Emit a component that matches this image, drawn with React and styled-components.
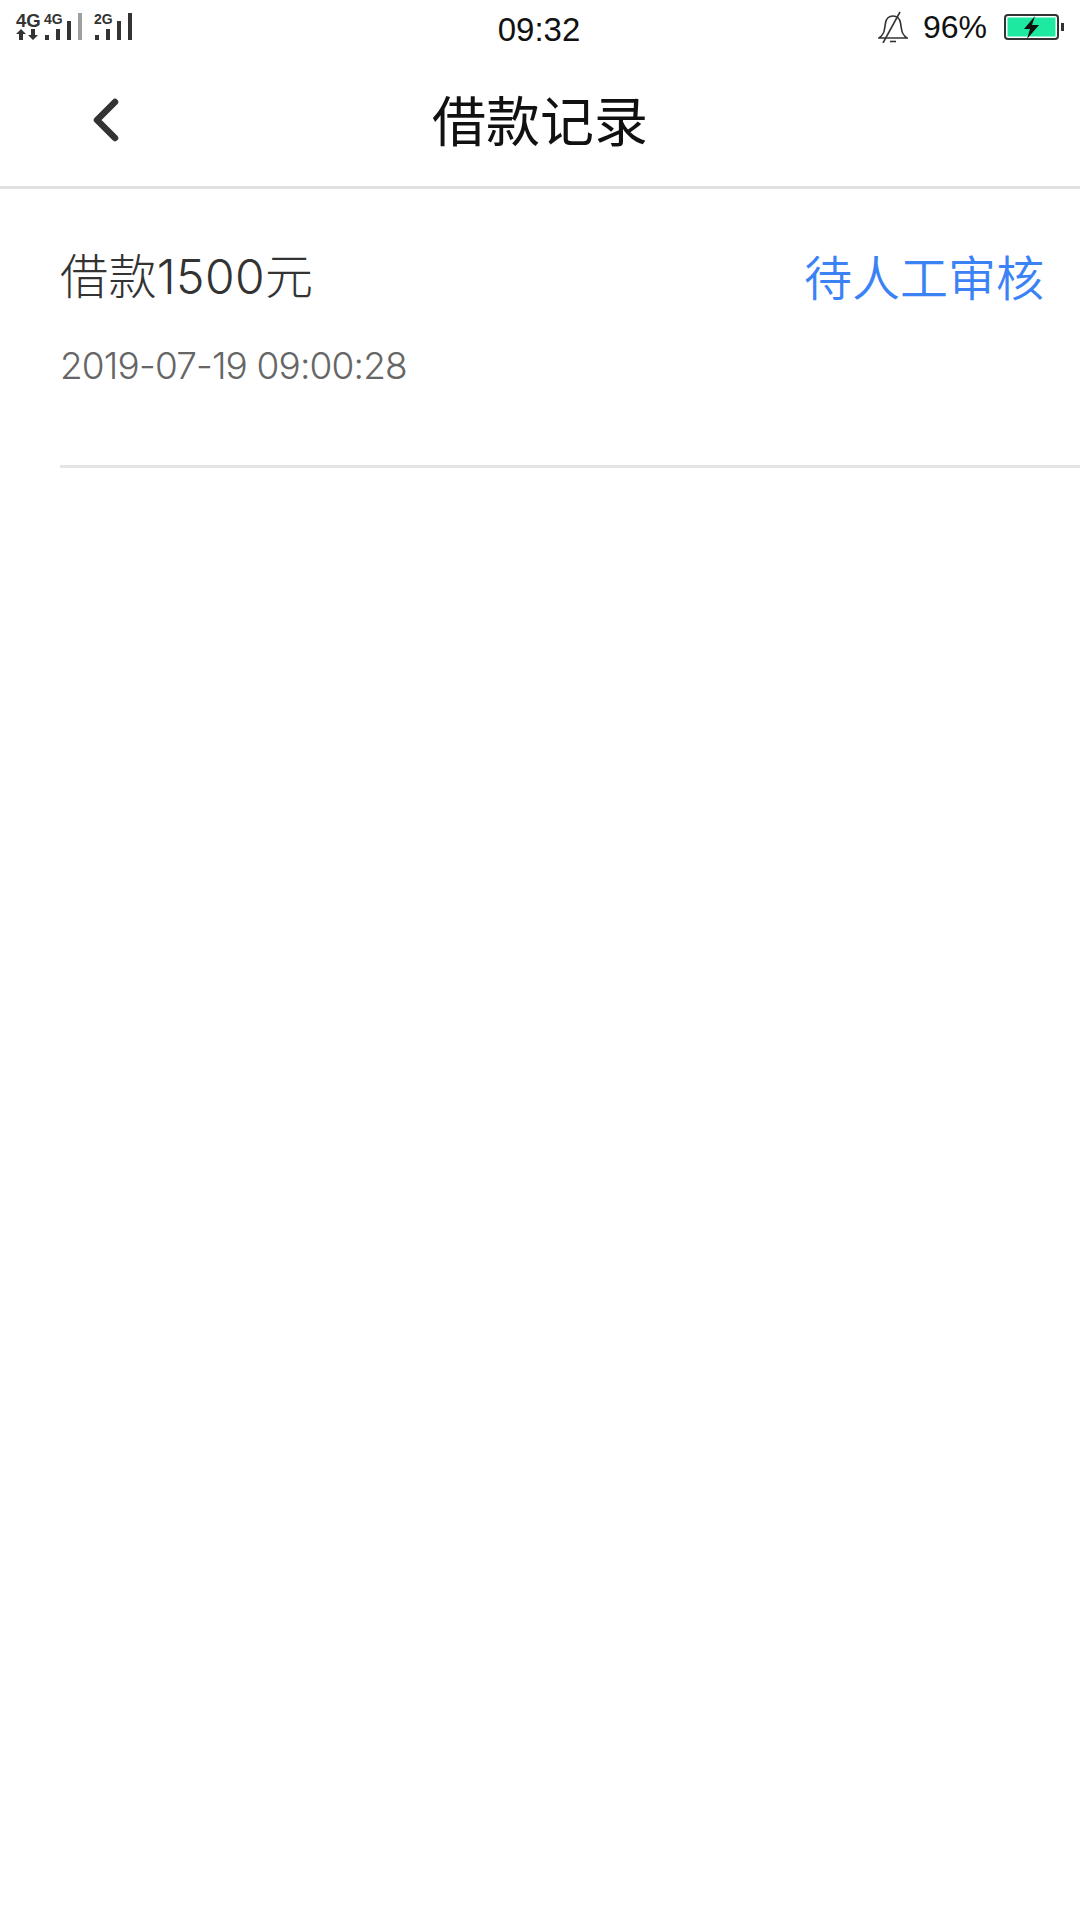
import React from 'react';
import styled, { createGlobalStyle } from 'styled-components';

const GlobalStyle = createGlobalStyle`
  html, body {
    margin: 0;
    padding: 0;
    background: #fff;
  }
  body {
    font-family: "Liberation Sans", "Noto Sans CJK SC", sans-serif;
  }
`

const Page = styled.div`
  width: 1080px;
  height: 1920px;
  background: #fff;
  overflow: hidden;
`

const StatusBar = styled.div`
  height: 58px;
  display: grid;
  grid-template-columns: 1fr auto 1fr;
  align-items: center;
  padding: 0 16px 0 14px;
`

const StatusLeft = styled.div`
  display: flex;
  align-items: center;
`

const Clock = styled.div`
  font-size: 33px;
  margin-top: 2px;
  color: #111;
`

const StatusRight = styled.div`
  display: flex;
  align-items: center;
  justify-content: flex-end;
  margin-top: -4px;
  font-size: 32px;
  color: #111;
`

const Percent = styled.span`
  margin: 0 17px 0 15px;
`

const NavBar = styled.div`
  height: 128px;
  display: flex;
  align-items: center;
  justify-content: center;
  position: relative;
  border-bottom: 3px solid #e1e1e1;
`

const BackButton = styled.div`
  position: absolute;
  left: 91px;
  top: 39px;
  width: 30px;
  height: 46px;
`

const Title = styled.div`
  font-size: 54px;
  line-height: 70px;
  margin-top: -6px;
  color: #111;
  font-family: "Noto Sans CJK SC", sans-serif;
`

const Record = styled.div`
  margin-left: 60px;
  height: 279px;
  padding-right: 36px;
  box-sizing: border-box;
  border-bottom: 3px solid #e5e5e5;
`

const RecordTop = styled.div`
  display: flex;
  justify-content: space-between;
  align-items: center;
  padding-top: 58px;
`

const Amount = styled.div`
  font-family: "Inter", "Noto Sans CJK SC", sans-serif;
  font-size: 48px;
  line-height: 60px;
  font-weight: 300;
  letter-spacing: 0.4px;
  color: #333;
`

const Status = styled.div`
  font-size: 48px;
  line-height: 60px;
  margin-top: -4px;
  font-weight: 350;
  color: #3b82f6;
  font-family: "Noto Sans CJK SC", sans-serif;
`

const DateText = styled.div`
  font-family: "Inter", sans-serif;
  margin-top: 36px;
  font-size: 37px;
  line-height: 46px;
  font-weight: 300;
  letter-spacing: -0.85px;
  color: #666;
`

function SignalIcon() {
  return (
    <svg width="120" height="44" viewBox="0 0 120 44">
      <g fill="#333" fontFamily="Liberation Sans, sans-serif" fontWeight="700">
        <text x="2" y="20" fontSize="18.5">4G</text>
        <text x="30" y="17" fontSize="14">4G</text>
        <text x="80" y="17" fontSize="14">2G</text>
        <path d="M5 33v-6H2l5-5 5 5H9v6zM17 22v6h-3l5 5 5-5h-3v-6z" />
        <rect x="31" y="28" width="4" height="5" />
        <rect x="42" y="22" width="4" height="11" />
        <rect x="53" y="14" width="4" height="19" />
        <rect x="64" y="6" width="4" height="27" fill="#a0a0a0" />
        <rect x="81" y="28" width="4" height="5" />
        <rect x="92" y="22" width="4" height="11" />
        <rect x="103" y="14" width="4" height="19" />
        <rect x="114" y="6" width="4" height="27" />
      </g>
    </svg>
  )
}

function BellOff() {
  return (
    <svg width="30" height="32" viewBox="0 0 30 32" fill="none" stroke="#333" strokeWidth="1.6">
      <path d="M1 27c3-2 5-5 5.500-9l1-6c.7-4 3.500-7 7.500-7s6.800 3 7.500 7l1 6c.5 4 2.500 7 5.500 9z" />
      <path d="M5 32 22 1" />
      <path d="M12 30.500h6" />
    </svg>
  )
}

function Battery() {
  return (
    <svg width="60" height="26" viewBox="0 0 60 26">
      <rect x="1" y="1" width="53" height="24" rx="3" fill="#fff" stroke="#333" strokeWidth="2" />
      <rect x="3.500" y="3.500" width="48" height="19" fill="#1de9a0" />
      <rect x="57" y="9" width="3" height="8" fill="#333" />
      <path d="M31 2 20 15h6l-3 10 12-14h-7l3-9z" fill="#111" />
    </svg>
  )
}

function BackIcon() {
  return (
    <svg width="30" height="46" viewBox="0 0 30 46" fill="none">
      <path d="M24 5 6 23l18 18" stroke="#333" strokeWidth="6.500" strokeLinecap="round" strokeLinejoin="round" />
    </svg>
  )
}

function App() {
  return (
    <Page>
      <GlobalStyle />
      <StatusBar>
        <StatusLeft><SignalIcon /></StatusLeft>
        <Clock>09:32</Clock>
        <StatusRight>
          <BellOff />
          <Percent>96%</Percent>
          <Battery />
        </StatusRight>
      </StatusBar>
      <NavBar>
        <BackButton><BackIcon /></BackButton>
        <Title>借款记录</Title>
      </NavBar>
      <Record>
        <RecordTop>
          <Amount>借款1500元</Amount>
          <Status>待人工审核</Status>
        </RecordTop>
        <DateText>2019-07-19 09:00:28</DateText>
      </Record>
    </Page>
  )
}

export default App;
